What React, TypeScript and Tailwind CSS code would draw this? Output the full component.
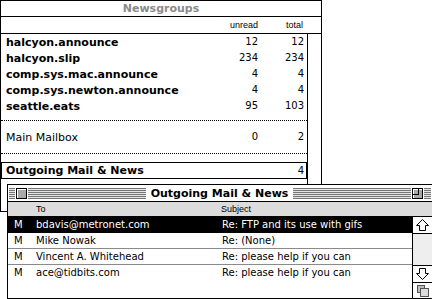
import type { ReactNode } from "react";

const groups = [
  { name: "halcyon.announce", unread: 12, total: 12 },
  { name: "halcyon.slip", unread: 234, total: 234 },
  { name: "comp.sys.mac.announce", unread: 4, total: 4 },
  { name: "comp.sys.newton.announce", unread: 4, total: 4 },
  { name: "seattle.eats", unread: 95, total: 103 },
];

const messages = [
  { to: "bdavis@metronet.com", subject: "Re: FTP and its use with gifs" },
  { to: "Mike Nowak", subject: "Re: (None)" },
  { to: "Vincent A. Whitehead", subject: "Re: please help if you can" },
  { to: "ace@tidbits.com", subject: "Re: please help if you can" },
];

const Stripes = ({ className = "" }: { className?: string }) => (
  <div
    className={
      "h-[11px] bg-[repeating-linear-gradient(to_bottom,#777_0px,#777_1px,#e4e4e4_1px,#e4e4e4_2px)] " +
      className
    }
  />
);

const ArrowBox = ({ down, children }: { down?: boolean; children?: ReactNode }) => (
  <div className="h-[16px] flex items-center justify-center bg-white">
    <svg width="13" height="12" viewBox="0 0 13 12" className={down ? "rotate-180" : ""}>
      <path d="M6.5 0.5 L12.5 6.5 L9.5 6.5 L9.5 11.5 L3.5 11.5 L3.5 6.5 L0.5 6.5 Z" fill="white" stroke="black" strokeWidth="1" />
    </svg>
    {children}
  </div>
);

const Newsgroups = () => (
  <div className="absolute left-0 top-0 w-[322px] h-[212px] border border-black bg-white font-['DejaVu_Sans',sans-serif] text-black">
    <div className="h-[16px] border-b border-black flex items-center justify-center">
      <span className="text-[11px] font-bold text-[#8a8a8a] leading-none">Newsgroups</span>
    </div>
    <div className="h-[17px] border-b border-black flex items-center font-['Liberation_Sans',sans-serif] text-[9px] leading-none">
      <div className="w-[207px]" />
      <div className="w-[50px] text-right">unread</div>
      <div className="w-[45px] text-right">total</div>
    </div>
    <div className="flex h-[200px]">
      <div className="w-[306px] flex flex-col">
        {groups.map((g) => (
          <div key={g.name} className="h-[16px] flex items-center pl-[5px] pr-[3px]">
            <span className="flex-1 text-[11px] font-bold leading-none">{g.name}</span>
            <span className="w-[50px] text-right text-[10px] leading-none">{g.unread}</span>
            <span className="w-[46px] text-right text-[10px] leading-none">{g.total}</span>
          </div>
        ))}
        <div className="h-[6px]" />
        <div className="border-t border-dotted border-black" />
        <div className="h-[32px] flex items-center pl-[5px] pr-[3px]">
          <span className="flex-1 text-[11px] leading-none">Main Mailbox</span>
          <span className="w-[50px] text-right text-[10px] leading-none">0</span>
          <span className="w-[46px] text-right text-[10px] leading-none">2</span>
        </div>
        <div className="border-t border-dotted border-black" />
        <div className="h-[8px]" />
        <div className="h-[17px] border border-black flex items-center pl-[4px] pr-[2px]">
          <span className="flex-1 text-[11px] font-bold leading-none">Outgoing Mail &amp; News</span>
          <span className="text-[10px] leading-none">4</span>
        </div>
      </div>
      <div className="flex-1 border-l border-black" />
    </div>
  </div>
);

const Outgoing = () => (
  <div className="absolute left-[7px] top-[184px] w-[426px] h-[115px] border border-black bg-white font-['DejaVu_Sans',sans-serif] text-black flex flex-col">
    <div className="h-[17px] border-b border-black flex items-center pl-[1px] pr-[1px]">
      <Stripes className="w-[6px]" />
      <div className="px-[1px] bg-white flex items-center">
        <div className="w-[11px] h-[11px] border border-black bg-[#a8a8a8] shadow-[inset_1px_1px_0_#fff]" />
      </div>
      <Stripes className="flex-1" />
      <span className="px-[5px] text-[11px] font-bold leading-none">Outgoing Mail &amp; News</span>
      <Stripes className="flex-1" />
      <div className="px-[1px] bg-white flex items-center">
        <div className="w-[11px] h-[11px] border border-black bg-[#a8a8a8] shadow-[inset_1px_1px_0_#fff] relative">
          <div className="absolute left-0 top-0 w-[6px] h-[6px] border-r border-b border-black" />
        </div>
      </div>
      <Stripes className="w-[7px]" />
    </div>
    <div className="h-[15px] border-b border-black bg-[#dcdcdc] flex items-center font-['Liberation_Sans',sans-serif] text-[9px] leading-none">
      <span className="w-[213px] pl-[28px]">To</span>
      <span>Subject</span>
    </div>
    <div className="flex flex-1">
      <div className="w-[404px] flex flex-col">
        {messages.map((m, i) => (
          <div
            key={m.to}
            className={
              "h-[16px] flex items-center text-[10px] leading-none " +
              (i === 0 ? "bg-black text-white" : "") +
              (i === 1 || i === 2 ? " border-b border-[#8a8a8a]" : "")
            }
          >
            <span className="w-[28px] pl-[6px]">M</span>
            <span className="w-[186px]">{m.to}</span>
            <span>{m.subject}</span>
          </div>
        ))}
      </div>
      <div className="flex-1 border-l border-black flex flex-col">
        <div className="border-b border-black">
          <ArrowBox />
        </div>
        <div className="flex-1 bg-[#eeeeee]" />
        <div className="border-t border-black">
          <ArrowBox down />
        </div>
        <div className="h-[16px] border-t border-black flex items-center justify-center">
          <svg width="12" height="12" viewBox="0 0 12 12">
            <rect x="0.5" y="0.5" width="7" height="7" fill="#bbb" stroke="#555" />
            <rect x="3.5" y="3.5" width="8" height="8" fill="#ddd" stroke="#555" />
          </svg>
        </div>
      </div>
    </div>
  </div>
);

export default function App() {
  return (
    <div className="relative w-[432px] h-[299px] overflow-hidden bg-white">
      <Newsgroups />
      <Outgoing />
    </div>
  );
}
